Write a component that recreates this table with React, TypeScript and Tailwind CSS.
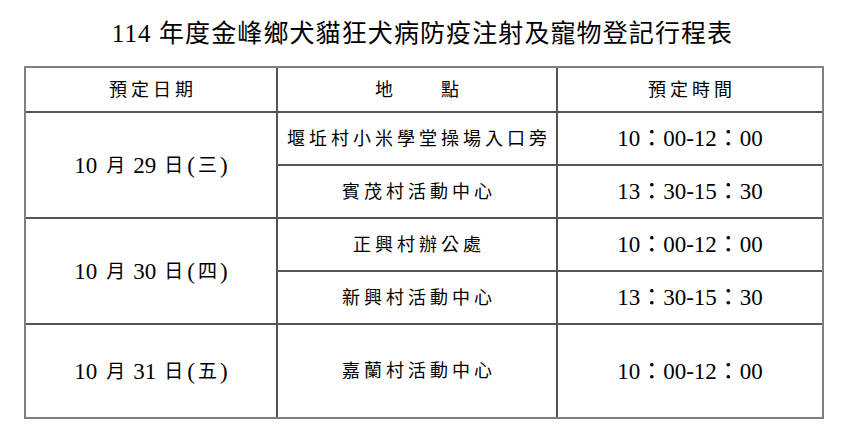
import React from "react";

const FONT = { fontFamily: '"Liberation Serif", "Noto Sans CJK TC", serif' };

function Cell({ children, className = "" }: { children: React.ReactNode; className?: string }) {
  return (
    <div className={`bg-white flex items-center justify-center text-black ${className}`}>
      {children}
    </div>
  );
}

function Place({ text }: { text: string }) {
  return <span className="text-[18px] tracking-[4px] pl-[4px] leading-none">{text}</span>;
}

function Time({ text }: { text: string }) {
  return <span className="text-[23px] leading-none">{text}</span>;
}

function DateText({ day, wd }: { day: string; wd: string }) {
  return (
    <span className="text-[23px] leading-none flex items-center">
      <span>10</span>
      <span className="text-[19px] ml-[9px] mr-[8px]">月</span>
      <span>{day}</span>
      <span className="text-[19px] ml-[8px] mr-[4px]">日</span>
      <span>(</span>
      <span className="text-[19px] mx-[3px]">{wd}</span>
      <span>)</span>
    </span>
  );
}

export default function App() {
  return (
    <div className="w-[845px] h-[435px] bg-white" style={FONT}>
      <div className="h-[66px] flex items-center justify-center">
        <h1 className="text-[25px] tracking-[1.1px] leading-none font-normal text-black">
          114 年度金峰鄉犬貓狂犬病防疫注射及寵物登記行程表
        </h1>
      </div>
      <div className="ml-[24px] w-[800px] border-2 border-[#808080] bg-[#555555] grid grid-cols-[250px_278px_264px] grid-rows-[43px_51px_51px_51px_51px_92px] gap-[2px]">
        <Cell>
          <Place text="預定日期" />
        </Cell>
        <Cell>
          <Place text="地　　點" />
        </Cell>
        <Cell>
          <Place text="預定時間" />
        </Cell>

        <Cell className="row-span-2">
          <DateText day="29" wd="三" />
        </Cell>
        <Cell>
          <Place text="堰坵村小米學堂操場入口旁" />
        </Cell>
        <Cell>
          <Time text="10：00-12：00" />
        </Cell>
        <Cell>
          <Place text="賓茂村活動中心" />
        </Cell>
        <Cell>
          <Time text="13：30-15：30" />
        </Cell>

        <Cell className="row-span-2">
          <DateText day="30" wd="四" />
        </Cell>
        <Cell>
          <Place text="正興村辦公處" />
        </Cell>
        <Cell>
          <Time text="10：00-12：00" />
        </Cell>
        <Cell>
          <Place text="新興村活動中心" />
        </Cell>
        <Cell>
          <Time text="13：30-15：30" />
        </Cell>

        <Cell>
          <DateText day="31" wd="五" />
        </Cell>
        <Cell>
          <Place text="嘉蘭村活動中心" />
        </Cell>
        <Cell>
          <Time text="10：00-12：00" />
        </Cell>
      </div>
    </div>
  );
}
